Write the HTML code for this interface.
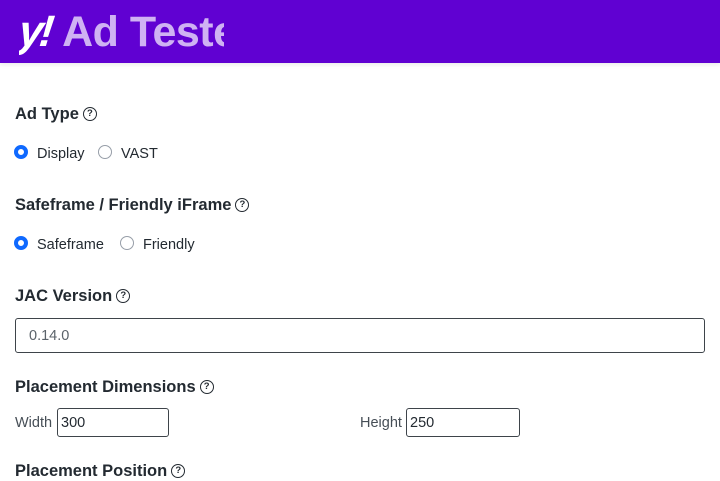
<!DOCTYPE html>
<html><head><style>
body{margin:0;width:720px;height:480px;overflow:hidden;background:#fff;font-family:"Liberation Sans",sans-serif;color:#232a31;position:relative}
.hdr{position:absolute;left:0;top:0;width:720px;height:63px;background:#6001d2;box-shadow:0 2px 4px rgba(0,0,0,.08)}
.logo{position:absolute;left:19px;top:6px;width:205px;height:52px;overflow:hidden;white-space:nowrap;font-weight:bold;font-size:43px;line-height:52px;letter-spacing:-0.5px}
.logo .y{color:#fff;font-size:44px;letter-spacing:-4px;font-style:italic;display:inline-block;transform:skewX(-6deg)}
.logo .t{color:#cfb2f3;margin-left:12px}
.a{position:absolute;white-space:nowrap}
h3{position:absolute;margin:0;font-size:16.5px;font-weight:bold;white-space:nowrap;line-height:20px}
.q{display:inline-block;width:12px;height:12px;border:1.3px solid #232a31;border-radius:50%;font-size:9.5px;line-height:12px;text-align:center;vertical-align:middle;margin-left:4px;position:relative;top:-1px;font-weight:bold}
.lbl{font-size:14.5px;line-height:18px}
.r{position:absolute;width:14px;height:14px;border-radius:50%;border:1px solid #979ea8;box-sizing:border-box}
.r.on{border:4.5px solid #0f69ff;background:#fff}
.in{position:absolute;border:1px solid #3e444a;border-radius:3px;box-sizing:border-box;font-size:14.5px;line-height:18px;padding-left:3px}
</style></head><body>
<div class="hdr"><div class="logo"><span class="y">y!</span><span class="t">Ad Tester</span></div></div>

<h3 style="left:15px;top:104px">Ad Type<span class="q">?</span></h3>
<div class="r on" style="left:14px;top:145px"></div><div class="a lbl" style="left:37px;top:145px">Display</div>
<div class="r" style="left:98px;top:145px"></div><div class="a lbl" style="left:121px;top:145px">VAST</div>

<h3 style="left:15px;top:195px">Safeframe / Friendly iFrame<span class="q">?</span></h3>
<div class="r on" style="left:14px;top:236px"></div><div class="a lbl" style="left:37px;top:236px">Safeframe</div>
<div class="r" style="left:120px;top:236px"></div><div class="a lbl" style="left:143px;top:236px">Friendly</div>

<h3 style="left:15px;top:286px">JAC Version<span class="q">?</span></h3>
<div class="in" style="left:15px;top:318px;width:690px;height:35px;padding-left:13px;line-height:34px;color:#5b636a">0.14.0</div>

<h3 style="left:15px;top:377px">Placement Dimensions<span class="q">?</span></h3>
<div class="a lbl" style="left:15px;top:414px;color:#464e56">Width</div>
<div class="in" style="left:57px;top:408px;width:112px;height:29px;line-height:28px">300</div>
<div class="a lbl" style="left:360px;top:414px;color:#464e56">Height</div>
<div class="in" style="left:406px;top:408px;width:114px;height:29px;line-height:28px">250</div>

<h3 style="left:15px;top:461px">Placement Position<span class="q">?</span></h3>
</body></html>
